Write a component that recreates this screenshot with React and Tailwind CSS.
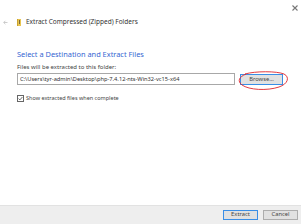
import React from 'react';

const App = () => {
  return (
    <div className="w-[301px] h-[224px] bg-white flex flex-col relative overflow-hidden" style={{ fontFamily: '"Noto Sans", "Liberation Sans", sans-serif' }}>
      {/* title bar */}
      <div className="h-[15px] flex justify-end items-center pr-[3px]">
        <svg width="6" height="6" viewBox="0 0 6 6" className="mt-[1px]">
          <path d="M0.5 0.5 L5.5 5.5 M5.5 0.5 L0.5 5.5" stroke="#777" strokeWidth="1.1" />
        </svg>
      </div>
      <div className="flex items-center h-[12px] pl-[3px] mt-[1px]">
        <svg width="5" height="5" viewBox="0 0 5 5">
          <path d="M4.5 2.5 H0.8 M2.4 0.8 L0.7 2.5 L2.4 4.2" stroke="#b8b8b8" strokeWidth="0.7" fill="none" />
        </svg>
        <div className="ml-[9px] w-[4px] h-[7px] bg-[#e8c550] border-l border-[#c9a230] relative">
          <div className="absolute left-[1px] top-[1px] w-[1px] h-[4px] bg-[#7a6a3a]" />
        </div>
        <span className="ml-[5px] text-[6.5px] text-[#333] leading-none">Extract Compressed (Zipped) Folders</span>
      </div>
      <div className="pl-[17px] pt-[23px] text-[7.4px] leading-none text-[#3566d2]">Select a Destination and Extract Files</div>
      <div className="pl-[17px] pt-[6px] text-[6px] leading-none text-[#444]">Files will be extracted to this folder:</div>
      <div className="flex items-center pl-[17px] pt-[3px]">
        <div className="w-[218px] h-[12px] border border-[#a8a8a8] flex items-center pl-[2px] text-[5.7px] text-[#333] leading-none">
          C:\Users\tyr-admin\Desktop\php-7.4.12-nts-Win32-vc15-x64
        </div>
        <div className="ml-[5px] w-[43px] h-[11px] bg-[#e1e1e1] border border-[#3a8ee6] flex items-center justify-center text-[5.8px] text-[#444] leading-none relative">
          Browse...
        </div>
      </div>
      <div className="flex items-center pl-[17px] pt-[10px]">
        <div className="w-[7px] h-[7px] border border-[#666] flex items-center justify-center">
          <svg width="5" height="5" viewBox="0 0 5 5">
            <path d="M0.6 2.6 L1.9 3.9 L4.4 1" stroke="#444" strokeWidth="0.8" fill="none" />
          </svg>
        </div>
        <span className="ml-[2px] text-[5.5px] text-[#444] leading-none">Show extracted files when complete</span>
      </div>
      <div className="flex-1" />
      <div className="h-[19px] bg-[#eeeeee] border-t border-[#e2e2e2] flex items-center justify-end gap-[5px] pr-[3px]">
        <div className="w-[35px] h-[10px] bg-[#e1e1e1] border border-[#3a8ee6] flex items-center justify-center text-[5.8px] text-[#444] leading-none">Extract</div>
        <div className="w-[35px] h-[10px] bg-[#e1e1e1] border border-[#adadad] flex items-center justify-center text-[5.8px] text-[#444] leading-none">Cancel</div>
      </div>
      {/* red ellipse annotation */}
      <svg className="absolute left-[237px] top-[70px]" width="54" height="22" viewBox="0 0 54 22">
        <path d="M8 4 C18 1 40 1 47 4 C53 7 51 14 42 17 C30 21 12 20 5 15 C0 11 2 7 9 4" stroke="#e0242a" strokeWidth="0.9" fill="none" />
      </svg>
    </div>
  );
};

export default App;
